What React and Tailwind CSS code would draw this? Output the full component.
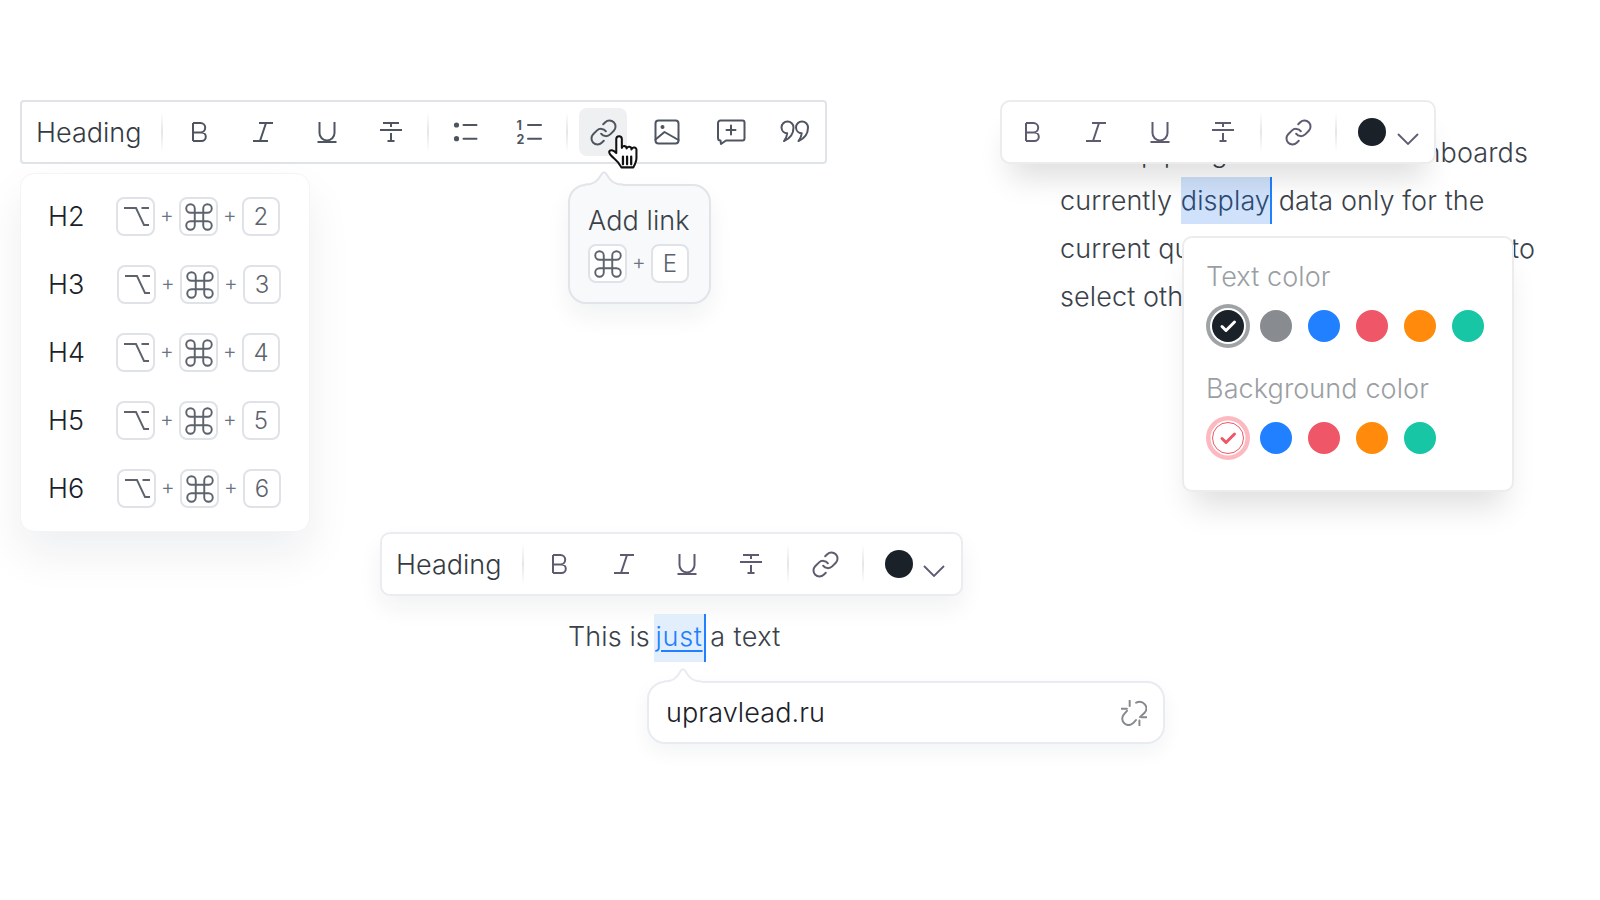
import React from "react";

const S = ({ children, size = 32, box = 32, w = 2, className = "" }) => (
  <svg width={size} height={size} viewBox={`0 0 ${box} ${box}`} fill="none" stroke="currentColor" strokeWidth={w} strokeLinecap="round" strokeLinejoin="round" className={className}>
    {children}
  </svg>
);

const Bold = () => <S><path d="M9 7v18M9 7h7.500a4.700 4.700 0 0 1 0 9.400H9M9 16.400h8.500a4.300 4.300 0 0 1 0 8.600H9" strokeLinecap="butt" /></S>;
const Italic = () => <S><path d="M12 7h14M6 25h15M19 7l-6 18" strokeLinecap="butt" /></S>;
const Under = () => <S><path d="M8.500 6v11a7.500 7.500 0 0 0 15 0V6M6.500 26h19" strokeLinecap="butt" /></S>;
const Strike = () => <S><path d="M8 7h16M5 14h22M16 7v4M16 17v8M12.500 25h7" strokeLinecap="butt" /></S>;
const Bullets = () => (
  <S>
    <circle cx="6.500" cy="9" r="2.600" fill="currentColor" stroke="none" />
    <circle cx="6.500" cy="22.700" r="2.600" fill="currentColor" stroke="none" />
    <path d="M13.500 9h13M13.500 22.700h13" />
  </S>
);
const Numbers = () => (
  <S>
    <path d="M15 9h13M15 22.700h13" />
    <text x="3.500" y="13.500" fontSize="12.500" fontWeight="700" fontFamily="Inter, sans-serif" fill="currentColor" stroke="none">1</text>
    <text x="3.500" y="27.500" fontSize="12.500" fontWeight="700" fontFamily="Inter, sans-serif" fill="currentColor" stroke="none">2</text>
  </S>
);
const LinkI = () => (
  <S size={29} box={24} w={1.65}>
    <path d="M10 13a5 5 0 0 0 7.540.540l3-3a5 5 0 0 0-7.070-7.070l-1.720 1.710" />
    <path d="M14 11a5 5 0 0 0-7.540-.540l-3 3a5 5 0 0 0 7.070 7.070l1.710-1.710" />
  </S>
);
const ImageI = () => (
  <S>
    <rect x="4.500" y="4.500" width="23" height="23" rx="3" />
    <circle cx="11.500" cy="11" r="2" fill="currentColor" stroke="none" />
    <path d="M4.500 23.500 13.500 16l14 8" />
  </S>
);
const CommentI = () => (
  <S>
    <path d="M5.500 4.500h22a2 2 0 0 1 2 2v16a2 2 0 0 1-2 2H11l-5 3.500-.5-3.500a2.500 2.500 0 0 1-2.500-2.500V7a2.500 2.500 0 0 1 2.500-2.500z" />
    <path d="M16 9.500v9M11.500 14h9" />
  </S>
);
const QuoteI = () => (
  <S>
    <path d="M2.500 11.500a6 6 0 1 1 12 0c0 6-3.500 11-9.500 13.500 2-2.500 3-4.500 3.200-7.700a6 6 0 0 1-5.700-5.800z" />
    <path d="M17 11.500a6 6 0 1 1 12 0c0 6-3.500 11-9.500 13.500 2-2.500 3-4.500 3.200-7.700a6 6 0 0 1-5.700-5.800z" />
  </S>
);
const Chevron = () => (
  <svg width="22" height="12" viewBox="0 0 22 12" fill="none" stroke="currentColor" strokeWidth="1.800"><path d="M1 1l10 10L21 1" /></svg>
);
const CmdI = () => (
  <S size={34} box={24} w={1.35}>
    <path d="M15 6v12a3 3 0 1 0 3-3H6a3 3 0 1 0 3 3V6a3 3 0 1 0-3 3h12a3 3 0 1 0-3-3" />
  </S>
);
const OptI = () => (
  <S size={26} box={26} w={1.9}>
    <path d="M1 4h12l8 17h5M18.500 4H26" strokeLinecap="butt" strokeLinejoin="miter" />
  </S>
);
const Unlink = () => (
  <S size={26} box={24} w={1.8}>
    <path d="M14 2.500c3-1.500 6-.8 8 1.500 2 2.500 1.700 5.500 0 7.500l-4.500 4.300" />
    <path d="M5.500 10 2.500 13.500c-2 2.500-1.700 6 .5 8 2.300 2 5.500 2 8 0l2.800-3" />
    <path d="M8 .5v5M.5 8h5M17 19v4.500M19 16h5" />
  </S>
);
const Check = ({ size = 20, w = 3 }) => (
  <svg width={size} height={size} viewBox="0 0 20 20" fill="none" stroke="currentColor" strokeWidth={w} strokeLinecap="round" strokeLinejoin="round"><path d="M4 10.500l4 4 8.500-8.500" /></svg>
);
const Hand = () => (
  <svg width="33" height="36" viewBox="0 0 32 35" fill="#fff" stroke="#111" strokeWidth="2" strokeLinejoin="round" strokeLinecap="round">
    <path d="M8 4a2.700 2.700 0 0 1 5.400 0v8.500a2.400 2.400 0 0 1 4.700.7 2.400 2.400 0 0 1 4.700.8 2.400 2.400 0 0 1 4.800 1.200v7.300c0 3-1.200 5.500-3 9H13c-1.500-3-4-6.200-7-8.700-3-2.500-5.500-4.800-4.800-6.800.8-2 3.800-1.500 6.800 1.500z" />
    <path d="M14.500 21v7.500M18.500 21v7.500M22.500 21v7.500" fill="none" strokeWidth="2.200" />
  </svg>
);

const Btn = ({ children, active }) => (
  <div className={`w-12 h-12 flex items-center justify-center rounded-lg ${active ? "bg-[#eff0f2]" : ""}`}>{children}</div>
);
const Sep = () => <div className="w-[2px] h-[40px] bg-gradient-to-b from-transparent via-[#e4e6e9] to-transparent" />;
const Key = ({ children, narrow }) => (
  <div className={`${narrow ? "w-[38px]" : "w-[39px]"} h-[39px] shrink-0 flex items-center justify-center border-2 border-[#dfe3e8] rounded-lg text-[24px] text-[#5c636d] bg-white`}>{children}</div>
);
const Plus = () => <div className="w-[24px] text-center text-[21px] leading-[24px] -mt-[3px] font-light text-[#6b7280]">+</div>;

const rows = [
  { h: "H2", n: "2", cls: "ml-0" },
  { h: "H3", n: "3", cls: "ml-[1px]" },
  { h: "H4", n: "4", cls: "ml-0" },
  { h: "H5", n: "5", cls: "ml-0" },
  { h: "H6", n: "6", cls: "ml-[1px]" },
];

const Swatch = ({ c }) => <div className="w-8 h-8 rounded-full" style={{ background: c }} />;
const palette = ["#2080ff", "#ef5668", "#ff8a0b", "#16c6a4"];

const Arrow = ({ fill, stroke }) => (
  <svg width="40" height="19" viewBox="0 0 40 19" className="absolute">
    <path d="M1 15.500C10 15.500 14 12 17 6q3-5.500 6 0c3 6 7 9.500 16 9.500V19H1z" fill={fill} />
    <path d="M1 15.500C10 15.500 14 12 17 6q3-5.500 6 0c3 6 7 9.500 16 9.500" fill="none" stroke={stroke} strokeWidth="2" />
  </svg>
);

export default function App() {
  return (
    <div className="w-[1600px] h-[900px] bg-white overflow-hidden font-['Inter',sans-serif] text-[27px] text-[#3a4149] font-light tracking-[0.1px]">
      <div className="flex h-[532px] pt-[100px]">
        {/* left column */}
        <div className="ml-[20px] w-[807px] shrink-0">
          <div className="h-[64px] border-2 border-[#e0e4e9] rounded-[4px] flex items-center pl-[14px] text-[#4e5560]">
            <span className="w-[104px] mr-[21px] pt-[3px] tracking-normal text-[#343a42]">Heading</span>
            <Sep />
            <div className="flex gap-[15.700px] mx-[12.500px]">
              <Btn><Bold /></Btn><Btn><Italic /></Btn><Btn><Under /></Btn><Btn><Strike /></Btn>
            </div>
            <Sep />
            <div className="flex gap-[15.700px] mx-[12.500px]">
              <Btn><Bullets /></Btn><Btn><Numbers /></Btn>
            </div>
            <Sep />
            <div className="relative flex gap-[16px] ml-[11.500px]">
              <Btn active><LinkI /></Btn><Btn><ImageI /></Btn><Btn><CommentI /></Btn><Btn><QuoteI /></Btn>
              <div className="absolute left-[29px] top-[27px]"><Hand /></div>
            </div>
          </div>
          <div className="flex mt-[9px]">
            <div className="w-[290px] h-[359px] bg-white rounded-[14px] border border-[#f3f4f6] shadow-[0_22px_45px_rgba(20,30,50,0.07)] pt-[23px] pl-[27px] flex flex-col gap-[29px]">
              {rows.map((r) => (
                <div key={r.h} className="flex items-center h-[39px]">
                  <span className="w-[68px] pt-[1px] text-[#1a2129]">{r.h}</span>
                  <div className={`flex items-center ${r.cls}`}>
                    <Key><OptI /></Key><Plus /><Key><CmdI /></Key><Plus /><Key narrow>{r.n}</Key>
                  </div>
                </div>
              ))}
            </div>
            <div className="relative ml-[258px] mt-[11px] w-[143px] h-[120px] bg-[#f8f9fb] border-2 border-[#e1e5ea] rounded-[18px] shadow-[0_12px_24px_rgba(20,30,50,0.06)] pt-[18px] pl-[18px]">
              <div className="absolute left-[14px] -top-[17px]"><Arrow fill="#f8f9fb" stroke="#e1e5ea" /></div>
              <div className="leading-[34px] text-[#3a4149]">Add link</div>
              <div className="flex items-center mt-[6px]">
                <Key><CmdI /></Key><Plus /><Key narrow>E</Key>
              </div>
            </div>
          </div>
        </div>
        {/* right column */}
        <div className="relative ml-[174px]">
          <div className="relative z-10 w-[436px] h-[64px] bg-white border-2 border-[#ececec] rounded-[10px] shadow-[0_24px_30px_-10px_rgba(0,0,0,0.13)] flex items-center pl-[6.500px] text-[#5e5b70] -ml-[1px]">
            <div className="flex gap-[15.600px]">
              <Btn><Bold /></Btn><Btn><Italic /></Btn><Btn><Under /></Btn><Btn><Strike /></Btn>
            </div>
            <div className="mx-[12.500px]"><Sep /></div>
            <Btn><LinkI /></Btn>
            <div className="mx-[12.500px]"><Sep /></div>
            <div className="ml-[9px] w-7 h-7 rounded-full bg-[#1a2129]" />
            <div className="ml-[11px] mt-[14px]"><Chevron /></div>
          </div>
          <div className="ml-[59px] -mt-[35px] leading-[48px] whitespace-nowrap">
            <div className="flex justify-between w-[468px] pl-[81px]"><span>pipe{"\u00a0\u00a0"}g</span><span>dashboards</span></div>
            <div>
              currently <span className="inline-block relative h-[47px] ml-[1px] -mr-[1px] bg-[#cfe1fb] text-[#2d4a70] border-r-[2px] border-[#2080ff] align-top">display</span> data only for the
            </div>
            <div className="flex justify-between w-[475px]"><span>current qu</span><span>to</span></div>
            <div>select oth</div>
          </div>
          <div className="absolute z-20 left-[181px] top-[136px] w-[332px] h-[256px] bg-white border-2 border-[#ececec] rounded-[10px] shadow-[0_24px_30px_-10px_rgba(0,0,0,0.13)] pl-[22px] pt-[21px]">
            <div className="text-[#9a9ea3] leading-[36px]">Text color</div>
            <div className="flex gap-4 ml-[6px] mt-[15px]">
              <div className="w-8 h-8 rounded-full bg-[#1a2129] text-white flex items-center justify-center shadow-[0_0_0_2px_#fff,0_0_0_6px_#a0a3a6]"><Check /></div>
              {["#888b8f", ...palette].map((c) => <Swatch key={c} c={c} />)}
            </div>
            <div className="text-[#9a9ea3] leading-[36px] mt-[29px]">Background color</div>
            <div className="flex gap-4 ml-[6px] mt-[15px]">
              <div className="w-8 h-8 rounded-full bg-white border-[1.500px] border-[#ef5668] text-[#ef5668] flex items-center justify-center shadow-[0_0_0_1.500px_#fff,0_0_0_6px_#fdb9c0]"><Check /></div>
              {palette.map((c) => <Swatch key={c} c={c} />)}
            </div>
          </div>
        </div>
      </div>
      {/* bottom cluster */}
      <div className="ml-[380px] w-[583px]">
        <div className="h-[64px] bg-white border-2 border-[#eaecef] rounded-[10px] shadow-[0_12px_24px_rgba(20,30,50,0.06)] flex items-center pl-[14px] text-[#5e5b70]">
          <span className="w-[103px] mr-[23px] pt-[3px] tracking-normal text-[#343a42]">Heading</span>
          <Sep />
          <div className="flex gap-[15.600px] ml-[12px] mr-[12px]">
            <Btn><Bold /></Btn><Btn><Italic /></Btn><Btn><Under /></Btn><Btn><Strike /></Btn>
          </div>
          <Sep />
          <div className="mx-[12.500px]"><Btn><LinkI /></Btn></div>
          <Sep />
          <div className="ml-[21.500px] w-7 h-7 rounded-full bg-[#1a2129]" />
          <div className="ml-[10px] mt-[14px]"><Chevron /></div>
        </div>
        <div className="ml-[188px] mt-[17px] leading-[48px] h-[48px] whitespace-nowrap relative">
          This is <span className="inline-block relative top-[1px] h-[48px] pl-[2px] pr-[1px] -ml-[4px] -mr-[3px] bg-[#e3eefd] text-[#2080ff] border-r-[2px] border-[#2080ff] align-top"><span className="relative -top-[1px] tracking-[0.7px] underline underline-offset-4">just</span></span> <span className="tracking-[0.4px]">a text</span>
        </div>
        <div className="relative ml-[267px] mt-[20px] w-[518px] h-[63px] bg-white border-2 border-[#e8ecf2] rounded-[18px] shadow-[0_8px_20px_rgba(20,30,50,0.05)] flex items-center justify-between pl-[17px] pr-[16px]">
          <div className="absolute left-[14px] -top-[17px]"><Arrow fill="#fff" stroke="#e8ecf2" /></div>
          <span className="text-[#1a2129] pt-[1px]">upravlead.ru</span>
          <span className="text-[#85888d]"><Unlink /></span>
        </div>
      </div>
    </div>
  );
}
